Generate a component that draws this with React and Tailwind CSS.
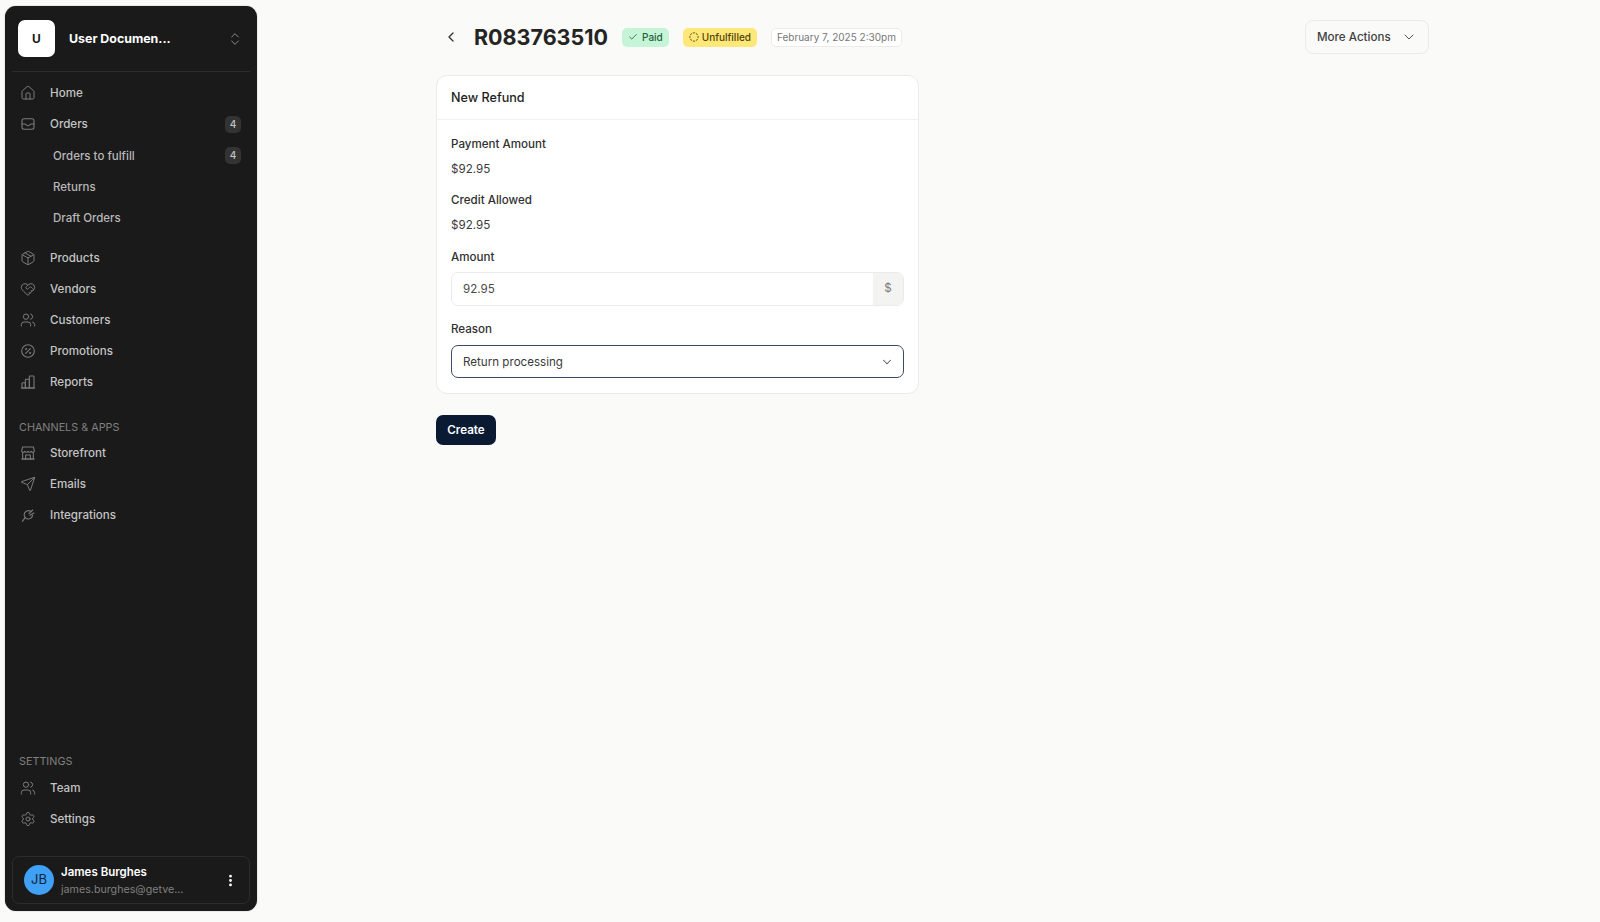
import {
  Check,
  ChevronDown,
  ChevronLeft,
  ChevronsUpDown,
  CircleDashed,
  EllipsisVertical,
  HeartHandshake,
  House,
  Package,
  Send,
  Settings,
  Users,
} from 'lucide-react';

const font = { fontFamily: 'Inter, "Liberation Sans", sans-serif' };

// Orders tray icon, lucide has nothing with this shape
const TrayIcon = ({ className }) => (
  <svg className={className} viewBox="0 0 24 24" fill="none" stroke="currentColor" strokeWidth="1.6" strokeLinecap="round" strokeLinejoin="round">
    <rect x="3" y="4" width="18" height="16" rx="3" />
    <path d="M3 12h4.500c.6 0 1 .3 1.300.8.5 1 1.800 1.700 3.200 1.700s2.700-.7 3.200-1.700c.3-.5.7-.8 1.300-.8H21" />
  </svg>
);

// Reports bars icon
const BarsIcon = ({ className }) => (
  <svg className={className} viewBox="0 0 24 24" fill="none" stroke="currentColor" strokeWidth="1.6" strokeLinecap="round" strokeLinejoin="round">
    <path d="M3 21v-7a1 1 0 0 1 1-1h4v8z" />
    <path d="M8 21V9a1 1 0 0 1 1-1h5v13z" />
    <path d="M14 21V4a1 1 0 0 1 1-1h5a1 1 0 0 1 1 1v17z" />
    <path d="M2 21h20" />
  </svg>
);

// Storefront with awning and a square door
const ShopIcon = ({ className }) => (
  <svg className={className} viewBox="0 0 24 24" fill="none" stroke="currentColor" strokeWidth="1.6" strokeLinecap="round" strokeLinejoin="round">
    <path d="M4 3h16l1.500 5.500a2.500 2.500 0 0 1-4.800 1 2.600 2.600 0 0 1-4.700 0 2.600 2.600 0 0 1-4.700 0 2.500 2.500 0 0 1-4.800-1z" />
    <path d="M4 11.500V21h16v-9.500" />
    <path d="M8.500 21v-6h7v6" />
    <path d="M2.500 21h19" />
  </svg>
);

// Integrations plug, open ring with a tail to the lower left
const PlugIcon = ({ className }) => (
  <svg className={className} viewBox="0 0 24 24" fill="none" stroke="currentColor" strokeWidth="1.6" strokeLinecap="round" strokeLinejoin="round">
    <path d="M16.500 6.800A6.300 6.300 0 1 0 18.800 12.500" />
    <path d="M13.500 10 19 4.500" />
    <path d="M15 12.500 21 9" />
    <path d="M8 15.500 3.500 21.500" />
  </svg>
);

// Promotions, the dots of lucide's percent vanish at this size
const PercentIcon = ({ className }) => (
  <svg className={className} viewBox="0 0 24 24" fill="none" stroke="currentColor" strokeWidth="1.6" strokeLinecap="round">
    <circle cx="12" cy="12" r="9.500" />
    <path d="m15.500 8.500-7 7" />
    <circle cx="9" cy="9" r="1.100" fill="currentColor" strokeWidth="0.8" />
    <circle cx="15" cy="15" r="1.100" fill="currentColor" strokeWidth="0.8" />
  </svg>
);

const Badge = ({ value }) => (
  <span className="ml-auto flex h-[17px] w-[16px] items-center justify-center rounded-[5px] bg-[#333333] text-[10px] font-medium text-[#c4c4c4]">
    {value}
  </span>
);

const NavItem = ({ icon: Icon, label, badge }) => (
  <div className="flex h-[31px] items-center pl-[11px] pr-[12px]">
    <Icon className="mb-[2px] h-[16px] w-[16px] shrink-0 text-[#7b7b7b]" strokeWidth={1.5} />
    <span className="ml-[14px] text-[11.600px] font-medium text-[#c4c4c4]">{label}</span>
    {badge && <Badge value={badge} />}
  </div>
);

const SubItem = ({ label, badge }) => (
  <div className="flex h-[31px] items-center pl-[44px] pr-[12px]">
    <span className="mt-[2px] text-[11.500px] font-medium text-[#b8b8b8]">{label}</span>
    {badge && <Badge value={badge} />}
  </div>
);

const SectionLabel = ({ children, className }) => (
  <div className={`pl-[10px] text-[10.800px] leading-[16px] text-[#808080] ${className}`}>{children}</div>
);

const Sidebar = () => (
  <aside className="ml-[5px] mt-[6px] flex h-[905px] w-[252px] shrink-0 flex-col rounded-[11px] bg-[#1a1a1a] px-[4px] shadow-[0_0_1px_rgba(0,0,0,0.6)]">
    {/* Workspace switcher */}
    <div className="mx-[3px] flex h-[66px] items-center border-b border-[#2c2c2c] pb-[1px]">
      <div className="ml-[6px] mt-[1px] flex h-[37px] w-[37px] items-center justify-center rounded-[7px] bg-white text-[12px] font-bold text-[#1a1a1a]">
        U
      </div>
      <span className="ml-[14px] mt-[2px] text-[12.400px] font-bold text-white">User Documen...</span>
      <ChevronsUpDown className="ml-auto mr-[7px] mt-[1px] h-[16px] w-[16px] text-[#8a8a8a]" strokeWidth={1.5} />
    </div>

    <nav className="mt-[6px]">
      <NavItem icon={House} label="Home" />
      <NavItem icon={TrayIcon} label="Orders" badge="4" />
      <SubItem label="Orders to fulfill" badge="4" />
      <SubItem label="Returns" />
      <SubItem label="Draft Orders" />
    </nav>

    <nav className="mt-[10px]">
      <NavItem icon={Package} label="Products" />
      <NavItem icon={HeartHandshake} label="Vendors" />
      <NavItem icon={Users} label="Customers" />
      <NavItem icon={PercentIcon} label="Promotions" />
      <NavItem icon={BarsIcon} label="Reports" />
    </nav>

    <SectionLabel className="mt-[22px]">CHANNELS &amp; APPS</SectionLabel>
    <nav className="mt-[2px]">
      <NavItem icon={ShopIcon} label="Storefront" />
      <NavItem icon={Send} label="Emails" />
      <NavItem icon={PlugIcon} label="Integrations" />
    </nav>

    <div className="mt-auto">
      <SectionLabel>SETTINGS</SectionLabel>
      <nav className="mt-[3px]">
        <NavItem icon={Users} label="Team" />
        <NavItem icon={Settings} label="Settings" />
      </nav>

      {/* Account card */}
      <div className="mx-[3px] mb-[7px] mt-[21px] flex h-[48px] items-center rounded-[7px] border border-[#2c2c2c] pl-[11px] pr-[11px]">
        <div className="flex h-[30px] w-[30px] shrink-0 items-center justify-center rounded-full bg-[#3fa0f5] text-[13px] text-[#10253a]">
          JB
        </div>
        <div className="ml-[7px] mt-[1px] min-w-0">
          <div className="text-[11.500px] font-semibold leading-[17px] text-white">James Burghes</div>
          <div className="text-[10.700px] leading-[17px] text-[#808080]">james.burghes@getve...</div>
        </div>
        <EllipsisVertical className="ml-auto h-[15px] w-[15px] text-white" strokeWidth={2.5} />
      </div>
    </div>
  </aside>
);

const Field = ({ label, value }) => (
  <div>
    <div className="text-[11.600px] font-medium leading-[18px] text-[#303030]">{label}</div>
    <div className="mt-[7px] text-[11.600px] leading-[18px] text-[#3b3b3b]">{value}</div>
  </div>
);

const RefundCard = () => (
  <div className="mt-[21px] w-[483px] rounded-[11px] border border-[#ebebe9] bg-white">
    <div className="flex h-[44px] items-center border-b border-[#f1f1ef] px-[14px] pt-[2px] text-[12.600px] font-medium text-[#1e1e1e]">
      New Refund
    </div>
    <div className="flex flex-col px-[14px] pb-[15px] pt-[15px]">
      <Field label="Payment Amount" value="$92.95" />
      <div className="mt-[13px]">
        <Field label="Credit Allowed" value="$92.95" />
      </div>

      <label className="mt-[14px] text-[11.600px] font-medium leading-[18px] text-[#303030]">Amount</label>
      <div className="mt-[6px] flex h-[34px] overflow-hidden rounded-[7px] border border-[#ebebe9]">
        <div className="flex flex-1 items-center px-[11px] pt-[2px] text-[11.600px] text-[#4a4a4a]">92.95</div>
        <div className="flex w-[30px] items-center justify-center bg-[#f3f3f2] text-[11.600px] text-[#7a7a7a]">$</div>
      </div>

      <label className="mt-[14px] text-[11.600px] font-medium leading-[18px] text-[#303030]">Reason</label>
      <div className="mt-[7px] flex h-[33px] items-center rounded-[7px] border border-[#3c4a63] pl-[11px] pr-[9px] text-[11.600px] text-[#3b3b3b]">
        <span className="mt-[2px]">Return processing</span>
        <ChevronDown className="ml-auto h-[14px] w-[14px] text-[#555555]" strokeWidth={1.75} />
      </div>
    </div>
  </div>
);

export default function App() {
  return (
    <div className="flex h-[922px] overflow-hidden bg-[#fafaf8]" style={font}>
      <Sidebar />
      <main className="ml-[179px] w-[993px] pt-[20px]">
        {/* Order header */}
        <div className="flex h-[34px] items-center">
          <ChevronLeft className="ml-[7px] h-[16px] w-[16px] text-[#333333]" strokeWidth={2} />
          <h1 className="ml-[15px] mt-[1px] text-[21.500px] font-bold text-[#242424]">R083763510</h1>
          <span className="ml-[14px] flex h-[19px] items-center gap-[4px] rounded-[5px] bg-[#c5f5d6] px-[6px] text-[10px] font-medium text-[#1f5f3d]">
            <Check className="h-[10px] w-[10px]" strokeWidth={2} />
            Paid
          </span>
          <span className="ml-[14px] flex h-[19px] items-center gap-[3px] rounded-[5px] bg-[#ffe778] px-[6px] text-[10px] font-medium text-[#4f4308]">
            <CircleDashed className="h-[10px] w-[10px]" strokeWidth={2} />
            Unfulfilled
          </span>
          <span className="ml-[14px] flex h-[19px] items-center rounded-[5px] border border-[#ecebe9] bg-white px-[5px] text-[10px] text-[#777777]">
            February 7, 2025 2:30pm
          </span>
          <button className="ml-auto flex h-[34px] w-[124px] items-center rounded-[8px] border border-[#ecebe9] pl-[11px] text-[11.600px] font-medium text-[#3f3f3f]">
            <span className="mt-[2px]">More Actions</span>
            <ChevronDown className="ml-[10px] h-[16px] w-[16px] text-[#555555]" strokeWidth={1.5} />
          </button>
        </div>

        <RefundCard />

        <button className="mt-[21px] flex h-[30px] w-[60px] items-center justify-center rounded-[7px] bg-[#0a1a33] pt-[2px] text-[11.600px] font-semibold text-white">
          Create
        </button>
      </main>
    </div>
  );
}
